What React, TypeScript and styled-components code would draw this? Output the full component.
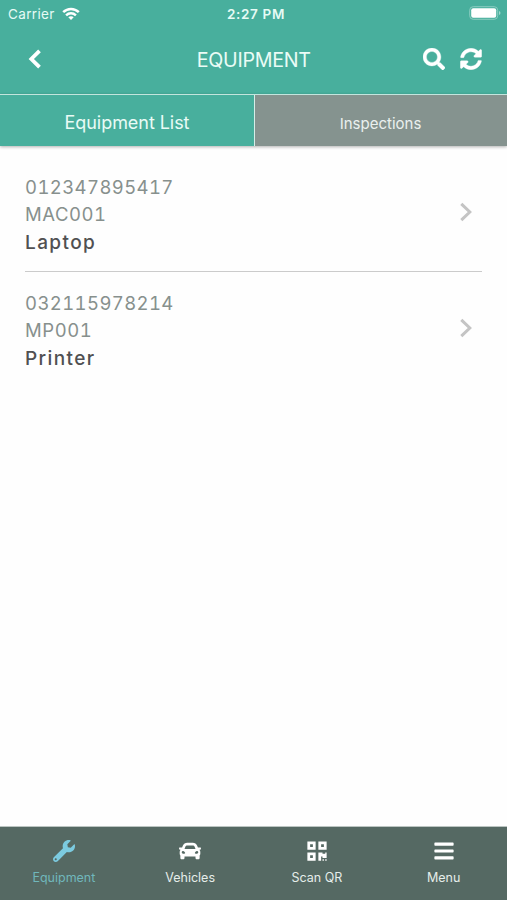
import React from "react";
import styled, { createGlobalStyle } from "styled-components";
import { FaSearch, FaSyncAlt, FaWrench, FaCar, FaQrcode, FaBars } from "react-icons/fa";

const GlobalStyle = createGlobalStyle`
  * { box-sizing: border-box; }
  body { margin: 0; background: #fefefe; font-family: Inter, "Liberation Sans", sans-serif; }
`;

const Screen = styled.div`
  width: 507px;
  height: 900px;
  display: flex;
  flex-direction: column;
  overflow: hidden;
  background: #fefefe;
`;

const StatusBar = styled.div`
  height: 28px;
  flex: none;
  display: grid;
  grid-template-columns: 1fr auto 1fr;
  align-items: center;
  padding: 0 6px 0 8px;
  background: #48af9d;
  color: #e6fbf5;
  font-size: 13.5px;
`;

const Carrier = styled.div`
  display: flex;
  align-items: center;
  gap: 7px;
  letter-spacing: 0.35px;
  svg { margin-top: -1px; }
`;

const Clock = styled.div`
  font-weight: 600;
  letter-spacing: 0.65px;
  padding-left: 3px;
`;

const Battery = styled.div`
  display: flex;
  justify-content: flex-end;
  margin-top: -2px;
`;

const Header = styled.header`
  height: 66px;
  flex: none;
  display: grid;
  grid-template-columns: 1fr auto 1fr;
  align-items: center;
  padding: 0 25.5px 5px 28px;
  background: #48af9d;
  color: #fff;
`;

const BackButton = styled.div`
  display: flex;
`;

const Title = styled.h1`
  margin: 0;
  padding: 2px 2px 0 0;
  font-size: 19.7px;
  line-height: 24px;
  font-weight: 400;
  letter-spacing: -0.3px;
  color: #eafcf6;
`;

const Actions = styled.div`
  display: flex;
  justify-content: flex-end;
  gap: 15px;
  svg { stroke: #fff; stroke-width: 8px; }
`;

const Tabs = styled.nav`
  height: 52px;
  flex: none;
  display: grid;
  grid-template-columns: 255px 1fr;
  border-top: 1px solid #c3e5dd;
  box-shadow: 0 1px 3px rgba(0, 0, 0, 0.3);
`;

const Tab = styled.div<{ $active?: boolean }>`
  display: flex;
  align-items: center;
  justify-content: center;
  padding-top: ${(p) => (p.$active ? "4px" : "6px")};
  padding-right: ${(p) => (p.$active ? "0" : "1px")};
  background: ${(p) => (p.$active ? "#48af9d" : "#85938f")};
  border-right: ${(p) => (p.$active ? "1px solid #d5eee8" : "none")};
  color: ${(p) => (p.$active ? "#e9fbf6" : "#eaf0ee")};
  font-size: ${(p) => (p.$active ? "18px" : "15px")};
  letter-spacing: ${(p) => (p.$active ? "-0.05px" : "0px")};
`;

const List = styled.main`
  flex: 1;
  padding: 10px 25px 0;
`;

const Row = styled.div`
  height: 116px;
  display: flex;
  align-items: center;
  justify-content: space-between;
  padding: 2px 9px 0 0;
  border-bottom: 1px solid #cbcbcb;
  &:last-child { border-bottom-color: transparent; }
  > svg { margin-bottom: 5px; }
`;

const Details = styled.div`
  padding-top: 2px;
  font-size: 18.5px;
  color: #87908d;
`;

const Line = styled.div<{ $spacing: number }>`
  line-height: 27px;
  font-variant-numeric: tabular-nums;
  letter-spacing: ${(p) => p.$spacing}px;
`;

const Name = styled(Line)`
  line-height: 30px;
  color: #505052;
  font-size: 19px;
  font-weight: 500;
`;

const BottomBar = styled.footer`
  height: 74px;
  flex: none;
  display: grid;
  grid-template-columns: repeat(4, 1fr);
  padding: 13px 0 0;
  border-top: 1px solid #bcc5c2;
  background: #556963;
`;

const NavItem = styled.div<{ $active?: boolean }>`
  display: flex;
  flex-direction: column;
  align-items: center;
  gap: 8px;
  padding-left: ${(p) => (p.$active ? "1px" : "0")};
  color: ${(p) => (p.$active ? "#7ccbe0" : "#fff")};
`;

const NavLabel = styled.span<{ $active?: boolean }>`
  color: ${(p) => (p.$active ? "#70b7bb" : "#e5edea")};
  font-size: 12.5px;
  line-height: 16px;
`;

const WifiIcon = () => (
  <svg width="18" height="14" viewBox="0 0 18 14" fill="none" stroke="#fff" strokeWidth="2.5">
    <path d="M1.2 5.2C5.7 0.8 12.3 0.8 16.8 5.2" />
    <path d="M4.1 8.3C6.9 5.7 11.1 5.7 13.9 8.3" />
    <path d="M9 13L6.3 10.3C7.8 9 10.2 9 11.7 10.3Z" fill="#fff" stroke="none" />
  </svg>
);

const BatteryIcon = () => (
  <svg width="32" height="14" viewBox="0 0 32 14">
    <rect x="0.7" y="0.7" width="28" height="12.6" rx="3.5" fill="none" stroke="#8accc0" strokeWidth="1" />
    <rect x="2.2" y="2.2" width="25" height="9.6" rx="2" fill="#fff" />
    <path d="M30 5V9Q31.5 8.5 31.5 7T30 5Z" fill="#a0d6cb" />
  </svg>
);

const BackIcon = () => (
  <svg width="14" height="20" viewBox="0 0 14 20" fill="none" stroke="#fff" strokeWidth="3.8">
    <path d="M11.5 1.8L3.3 10L11.5 18.2" />
  </svg>
);

const ForwardIcon = () => (
  <svg width="14" height="20" viewBox="0 0 14 20" fill="none" stroke="#c4c4c4" strokeWidth="3">
    <path d="M2.3 1.8L10.8 10L2.3 18.2" />
  </svg>
);

const items = [
  { serial: "012347895417", code: "MAC001", name: "Laptop" },
  { serial: "032115978214", code: "MP001", name: "Printer" },
];

const navItems = [
  { label: "Equipment", Icon: FaWrench, active: true },
  { label: "Vehicles", Icon: FaCar, active: false },
  { label: "Scan QR", Icon: FaQrcode, active: false },
  { label: "Menu", Icon: FaBars, active: false },
];

export default function App() {
  return (
    <>
      <GlobalStyle />
      <Screen>
        <StatusBar>
          <Carrier>Carrier <WifiIcon /></Carrier>
          <Clock>2:27 PM</Clock>
          <Battery><BatteryIcon /></Battery>
        </StatusBar>
        <Header>
          <BackButton><BackIcon /></BackButton>
          <Title>EQUIPMENT</Title>
          <Actions><FaSearch size={22} /><FaSyncAlt size={22} /></Actions>
        </Header>
        <Tabs>
          <Tab $active>Equipment List</Tab>
          <Tab>Inspections</Tab>
        </Tabs>
        <List>
          {items.map((item) => (
            <Row key={item.serial}>
              <Details>
                <Line $spacing={0.4}>{item.serial}</Line>
                <Line $spacing={0.55}>{item.code}</Line>
                <Name $spacing={1.4}>{item.name}</Name>
              </Details>
              <ForwardIcon />
            </Row>
          ))}
        </List>
        <BottomBar>
          {navItems.map(({ label, Icon, active }) => (
            <NavItem key={label} $active={active}>
              <Icon size={22} />
              <NavLabel $active={active}>{label}</NavLabel>
            </NavItem>
          ))}
        </BottomBar>
      </Screen>
    </>
  );
}
